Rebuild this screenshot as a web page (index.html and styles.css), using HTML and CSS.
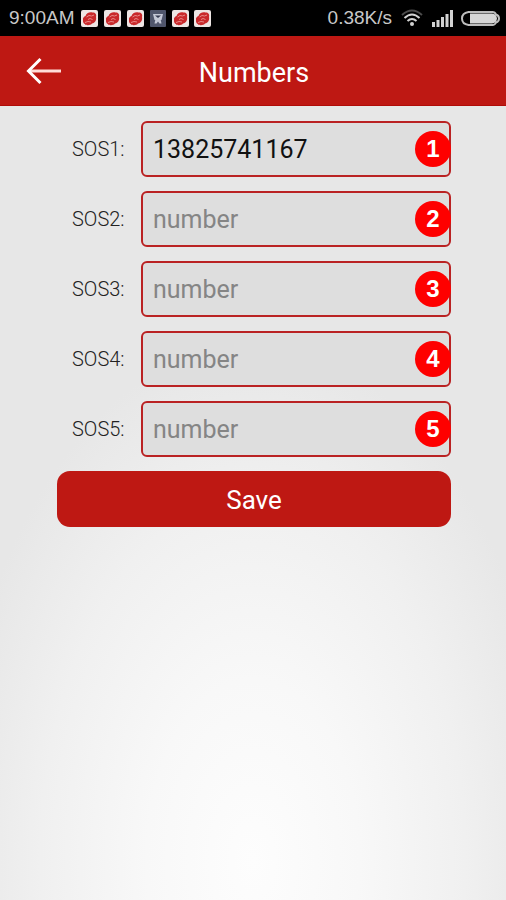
FILE: index.html
```html
<!DOCTYPE html>
<html lang="en">
<head>
<meta charset="utf-8">
<meta name="viewport" content="width=device-width, initial-scale=1">
<title>Numbers</title>
<link rel="stylesheet" href="styles.css">
</head>
<body>
<svg class="defs" aria-hidden="true">
  <symbol id="app" viewBox="0 0 17 17">
    <rect width="17" height="17" rx="2" fill="#eee6e4"/>
    <path d="M2 10C1.500 8 3 6.500 4.500 6C5 3 9 1.500 11.500 2.500C14.500 2 15.800 5 15 7C15.800 10 14 13 11 13.500C10 15.500 4.500 15.800 3.800 14C2.500 13.500 1.800 12 2 10Z" fill="#c9292b"/>
    <path d="M5.500 7L8 5.500L10.500 6L13 5M7 9.500L9 8.500L11.500 9.500M4 12.500L7 11.500L10 12" fill="none" stroke="#e88a88" stroke-width="1"/>
  </symbol>
</svg>
<div class="status">
  <span>9:00AM</span>
  <div class="notices">
    <svg class="notice"><use href="#app"/></svg>
    <svg class="notice"><use href="#app"/></svg>
    <svg class="notice"><use href="#app"/></svg>
    <svg class="notice" viewBox="0 0 17 17"><rect x="1" width="16" height="17" rx="1" fill="#50566c"/><path d="M4 4H14L12.500 10H5.500Z" fill="#c4c8d6"/><path d="M6 5.500H12L9 8Z" fill="#343950"/><path d="M6.500 9L5.500 13.500H7.500L9 11.500L10.500 13.500H12.500L11.500 9Z" fill="#c4c8d6"/></svg>
    <svg class="notice"><use href="#app"/></svg>
    <svg class="notice"><use href="#app"/></svg>
  </div>
  <span class="speed">0.38K/s</span>
  <svg class="wifi" viewBox="0 0 22 18"><g fill="none" stroke-linecap="butt"><path d="M1 6Q11-3 21 6" stroke="#4c4c4c" stroke-width="2"/><path d="M3.500 9Q11 2 18.500 9" stroke="#d2d2d2" stroke-width="2"/><path d="M6.500 12Q11 8 15.500 12" stroke="#d2d2d2" stroke-width="2"/></g><circle cx="11" cy="15" r="2" fill="#d2d2d2"/></svg>
  <svg class="signal" viewBox="0 0 22 17"><path d="M0 12h3v5H0zM4.500 10h3v7h-3zM9 7h3v10H9zM13.500 4h3v13h-3zM18 0h3v17h-3z" fill="#d2d2d2"/></svg>
  <svg class="battery" viewBox="0 0 39 15"><path d="M7.500 1H31.500Q34 1 35 3.500Q38 4.500 38 7.500Q38 10.500 35 11.500Q34 14 31.500 14H7.500Q1 13 1 7.500Q1 2 7.500 1Z" fill="none" stroke="#bdbdbd" stroke-width="2"/><path d="M9 2.500H31Q35.500 3 36 7.500Q35.500 12 31 12.500H9Z" fill="#d6d6d6"/></svg>
</div>
<header class="bar">
  <button class="back" type="button" aria-label="Back"><svg viewBox="0 0 36 28"><path d="M3 14H35" stroke="#ffdcd8" stroke-width="3"/><path d="M14.500 2L2.500 14L14.500 26" fill="none" stroke="#fff" stroke-width="3"/></svg></button>
  <h1>Numbers</h1>
</header>
<main>
  <form class="form">
    <div class="row"><label for="sos1">SOS1:</label><div class="field"><input id="sos1" type="tel" placeholder="number" value="13825741167"><span class="badge">1</span></div></div>
    <div class="row"><label for="sos2">SOS2:</label><div class="field"><input id="sos2" type="tel" placeholder="number"><span class="badge">2</span></div></div>
    <div class="row"><label for="sos3">SOS3:</label><div class="field"><input id="sos3" type="tel" placeholder="number"><span class="badge">3</span></div></div>
    <div class="row"><label for="sos4">SOS4:</label><div class="field"><input id="sos4" type="tel" placeholder="number"><span class="badge">4</span></div></div>
    <div class="row"><label for="sos5">SOS5:</label><div class="field"><input id="sos5" type="tel" placeholder="number"><span class="badge">5</span></div></div>
    <button class="save" type="button">Save</button>
  </form>
</main>
</body>
</html>
```
FILE: styles.css
```css
* { box-sizing: border-box; }

body {
  margin: 0;
  min-height: 100vh;
  display: flex;
  flex-direction: column;
  font-family: Roboto, "Liberation Sans", sans-serif;
  background: #e7e7e7;
}

.defs { position: absolute; width: 0; height: 0; }

.status {
  display: flex;
  align-items: center;
  height: 36px;
  padding: 0 6px 0 9px;
  background: #000;
  color: #c8c8c8;
  font: 19px/24px "Liberation Sans", Arial, sans-serif;
}

.notices {
  display: flex;
  justify-content: space-between;
  width: 130px;
  margin-left: 7px;
}

.notice { width: 17px; height: 17px; }
.speed { margin-left: auto; }
.wifi { width: 22px; height: 18px; margin-left: 9px; }
.signal { width: 22px; height: 17px; margin-left: 9px; }
.battery { width: 39px; height: 15px; margin-left: 7px; }

.bar {
  display: grid;
  grid-template-columns: 88px 1fr 86px;
  align-items: center;
  height: 70px;
  background: #be1813;
  border-bottom: 1px solid #b00c08;
  color: #fff;
}

.bar h1 {
  margin: 0;
  padding-top: 4px;
  text-align: center;
  font-size: 27px;
  line-height: 32px;
  font-weight: 400;
}

.back {
  display: flex;
  height: 56px;
  padding: 0 26px;
  align-items: center;
  border: 0;
  background: none;
}

.back svg { width: 36px; height: 28px; }

main {
  flex: 1;
  padding: 15px 55px 24px 57px;
  background: radial-gradient(ellipse 60% 65% at 50% 95%, #fdfdfd 0%, #f8f8f8 35%, #f0f0f0 70%, #e7e7e7 100%);
}

.form {
  display: flex;
  flex-direction: column;
  gap: 14px;
}

.row {
  display: flex;
  align-items: center;
}

.row label {
  width: 84px;
  padding-left: 15px;
  color: #222;
  font-size: 20px;
  line-height: 24px;
  font-weight: 300;
}

.field { position: relative; flex: 1; }

.field input {
  display: block;
  width: 100%;
  height: 56px;
  padding: 0 40px 0 10px;
  border: 2px solid #ba2223;
  border-radius: 6px;
  background: #dedede;
  color: #111;
  font: 25px/30px Roboto, "Liberation Sans", sans-serif;
}

.field input::placeholder { color: #858585; opacity: 1; }

.badge {
  position: absolute;
  top: 10px;
  right: 0;
  width: 36px;
  height: 36px;
  border-radius: 50%;
  background: #fe0000;
  color: #fff;
  text-align: center;
  font: bold 24px/36px "Liberation Sans", Arial, sans-serif;
}

.save {
  height: 56px;
  padding: 2px 0 0;
  border: 0;
  border-radius: 13px;
  background: #be1813;
  color: #fff;
  font: 26px/32px Roboto, "Liberation Sans", sans-serif;
}
```
